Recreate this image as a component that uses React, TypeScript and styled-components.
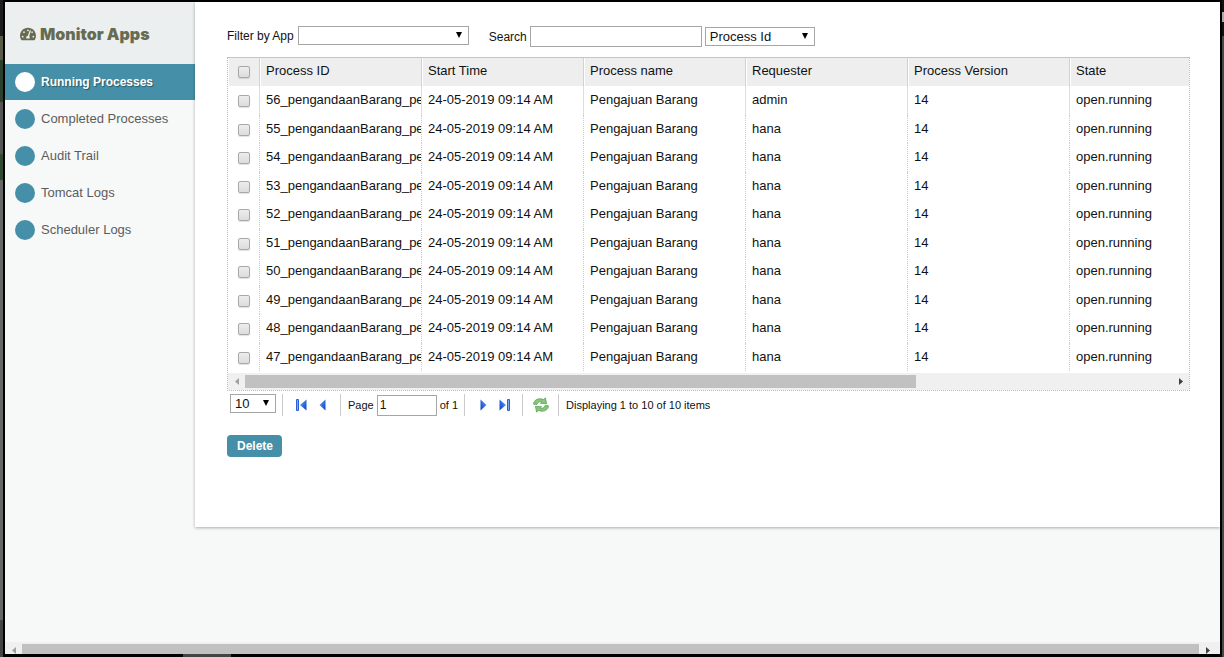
import React from 'react';
import styled, { createGlobalStyle, css } from 'styled-components';
import { FaTachometerAlt } from 'react-icons/fa';

const TEAL = '#4590a8';

const GlobalStyle = createGlobalStyle`
  *, *::before, *::after { box-sizing: border-box; }
  body {
    margin: 0;
    background: #000;
    color: #111;
    font: 13px/16px "Liberation Sans", Arial, sans-serif;
  }
  input, select, button { font-family: inherit; margin: 0; }
`;

const Backdrop = styled.div`
  display: flex;
  min-height: 100vh;
  padding: 2px 4px 3px 5px;
  background:
    linear-gradient(#444, #444) 183px 100% / 48px 3px no-repeat,
    linear-gradient(#1c1c1c 0 36px, #5a5a48 36px 60px, #2c4030 60px 102px, #555 102px 154px, #2f4a30 154px 180px, #666 180px 620px, #444 620px) 0 0 / 3px 100% no-repeat,
    linear-gradient(#111 0 12px, #aaa 12px 22px, #111 22px 36px, #444a4a 36px) 100% 0 / 2px 100% no-repeat,
    #000;
`;

const Overlay = styled.div`
  flex: 1;
  min-width: 0;
  display: flex;
  flex-direction: column;
  background: #f7f9f9;
`;

const Columns = styled.div`
  flex: 1;
  display: flex;
  align-items: flex-start;
`;

const Sidebar = styled.aside`
  flex: 0 0 190px;
`;

const Title = styled.h1`
  display: flex;
  align-items: center;
  gap: 4px;
  height: 62px;
  margin: 0;
  padding: 2px 0 0 15px;
  background: #ebeff0;
  color: #676c50;
  font: 900 16px/20px Inter, "Arial Black", sans-serif;
  svg { width: 16px; height: 16px; }
`;

const Menu = styled.nav`
  display: flex;
  flex-direction: column;
  gap: 1px;
`;

const MenuLink = styled.a<{ $active?: boolean }>`
  display: flex;
  align-items: center;
  gap: 6px;
  height: 36px;
  padding-left: 10px;
  color: #5c5c5c;
  text-decoration: none;
  &::before {
    content: '';
    width: 20px;
    height: 20px;
    border-radius: 50%;
    background: ${TEAL};
  }
  ${p => p.$active && css`
    background: ${TEAL};
    color: #fff;
    font-size: 12px;
    font-weight: bold;
    text-shadow: 1px 1px 1px rgba(0, 0, 0, 0.4);
    &::before { background: #fff; }
  `}
`;

const Main = styled.main`
  flex: 1;
  min-width: 0;
  min-height: 524px;
  padding: 24px 30px 70px 32px;
  background: #fff;
  box-shadow: 0 1px 3px rgba(0, 0, 0, 0.3);
  clip-path: inset(0 0 -6px -4px);
`;

const Filters = styled.form`
  display: flex;
  align-items: flex-start;
  gap: 20px;
  height: 21px;
  margin-bottom: 10px;
  font-size: 12px;
`;

const FilterGroup = styled.div`
  display: flex;
  align-items: center;
`;

const FilterLabel = styled.label`
  margin-right: 4px;
`;

const SelectBox = styled.span<{ $width: number }>`
  position: relative;
  display: block;
  width: ${p => p.$width}px;
  height: 19px;
  svg {
    position: absolute;
    right: 7px;
    top: 6px;
    pointer-events: none;
  }
`;

const NativeSelect = styled.select`
  appearance: none;
  display: block;
  width: 100%;
  height: 100%;
  padding: 0 4px;
  border: 1px solid #a6a6a6;
  border-radius: 0;
  background: #fff;
  color: #111;
  font-size: 13px;
  line-height: 16px;
`;

const TextField = styled.input`
  height: 21px;
  padding: 0 2px;
  border: 1px solid #a6a6a6;
  background: #fff;
  color: #111;
  font-size: 12px;
`;

const SearchField = styled(TextField)`
  width: 172px;
  margin-right: 3px;
`;

const SearchLabel = styled(FilterLabel)`
  margin-right: 3px;
`;

const Grid = styled.div`
  border: 1px dotted #bbb;
  border-top: 1px solid #c4c4c4;
`;

const Table = styled.table`
  width: 100%;
  margin-bottom: 2px;
  border-collapse: separate;
  border-spacing: 0;
  table-layout: fixed;
`;

const cell = css`
  overflow: hidden;
  white-space: nowrap;
  text-align: left;
  vertical-align: top;
  font-weight: normal;
  &:last-child { border-right: 0; }
`;

const HeadCell = styled.th<{ $width?: number }>`
  ${cell}
  width: ${p => (p.$width ? `${p.$width}px` : 'auto')};
  height: 28px;
  padding: 5px 0 0 6px;
  border-right: 1px solid #d2d2d2;
  background: #eee;
  box-shadow: inset 1px 0 0 #fff;
  &:first-child { padding: 8px 0 0 10px; }
`;

const BodyCell = styled.td`
  ${cell}
  padding: 6px 0 0 6px;
  border-right: 1px dotted #ccc;
  &:first-child { padding: 9px 0 0 10px; }
`;

const Row = styled.tr`
  height: 29px;
  &:nth-child(even) { height: 28px; }
  &:first-child > td { border-right-style: solid; border-right-color: #ddd; }
`;

const Check = styled.input`
  appearance: none;
  display: block;
  width: 12px;
  height: 12px;
  margin: 0;
  border: 1px solid #a8a8a8;
  border-radius: 2px;
  background: linear-gradient(#ededed, #dcdcdc);
  box-shadow: 0 1px 1px rgba(0, 0, 0, 0.12);
`;

const Bar = styled.div<{ $height: number; $end: number }>`
  display: flex;
  height: ${p => p.$height}px;
  padding: 2px ${p => p.$end}px 0 0;
  overflow: hidden;
  background: #f0f0f0;
`;

const BarEnd = styled.span<{ $color: string }>`
  display: flex;
  flex: 0 0 17px;
  align-items: center;
  justify-content: center;
  height: 13px;
  color: ${p => p.$color};
`;

const Thumb = styled.span<{ $grow: number }>`
  flex: ${p => p.$grow} 0 0;
  height: 13px;
  background: #c1c1c1;
`;

const Gap = styled.span<{ $grow: number }>`
  flex: ${p => p.$grow} 0 0;
`;

const Pager = styled.div`
  display: flex;
  align-items: center;
  height: 28px;
  padding-left: 3px;
  font-size: 11px;
`;

const Group = styled.div<{ $left: number; $right: number; $gap?: number }>`
  display: flex;
  align-items: center;
  gap: ${p => p.$gap ?? 0}px;
  height: 22px;
  padding: 0 ${p => p.$right}px 0 ${p => p.$left}px;
  border-right: 1px solid #ccc;
`;

const SizeGroup = styled(Group)`
  padding-bottom: 3px;
`;

const IconButton = styled.button`
  display: flex;
  align-items: center;
  justify-content: center;
  padding: 0;
  border: 0;
  background: none;
`;

const PageField = styled(TextField)`
  width: 60px;
`;

const Status = styled.span`
  margin-left: 7px;
`;

const DeleteButton = styled.button`
  display: block;
  height: 22px;
  margin-top: 16px;
  padding: 0 9px 0 10px;
  border: 0;
  border-radius: 4px;
  background: ${TEAL};
  color: #fff;
  font-size: 12px;
  font-weight: bold;
`;

function Select({ id, label, width, options }: { id: string; label?: string; width: number; options: string[] }) {
  return (
    <SelectBox $width={width}>
      <NativeSelect id={id} aria-label={label}>
        {options.map(o => <option key={o}>{o}</option>)}
      </NativeSelect>
      <svg width="6" height="6" viewBox="0 0 6 6" aria-hidden="true"><path d="M0 0h6L3 6z" fill="#000" /></svg>
    </SelectBox>
  );
}

function ArrowGlyph({ right }: { right?: boolean }) {
  return (
    <svg width="4" height="7" viewBox="0 0 4 7" aria-hidden="true">
      <path d={right ? 'M0 0L4 3.5L0 7z' : 'M4 0L0 3.5L4 7z'} fill="currentColor" />
    </svg>
  );
}

function ScrollBar({ height, thumb, rest, end = 0 }: { height: number; thumb: number; rest: number; end?: number }) {
  return (
    <Bar $height={height} $end={end} aria-hidden="true">
      <BarEnd $color="#a0a0a0"><ArrowGlyph /></BarEnd>
      <Thumb $grow={thumb} />
      {rest > 0 && <Gap $grow={rest} />}
      <BarEnd $color="#404040"><ArrowGlyph right /></BarEnd>
    </Bar>
  );
}

function PageArrow({ label, right, edge }: { label: string; right?: boolean; edge?: boolean }) {
  const width = edge ? 11 : 7;
  const id = `pg-${label}`;
  return (
    <IconButton type="button" aria-label={`${label} page`}>
      <svg width={width} height="12" viewBox={`0 0 ${width} 12`}>
        <defs>
          <linearGradient id={id} x1="0" y1="0" x2="1" y2="1">
            <stop offset="0" stopColor="#8bb4f4" />
            <stop offset="0.5" stopColor="#2f6fe6" />
            <stop offset="1" stopColor="#1440b4" />
          </linearGradient>
        </defs>
        <g transform={right ? `translate(${width} 0) scale(-1 1)` : undefined}>
          {edge && <path d="M0.5 0.5h2v11h-2z" fill="#7aa8f4" stroke="#2a60d4" />}
          <path d={edge ? 'M10.5 0.5v11L4 6z' : 'M6.5 0.5v11L0.5 6z'} fill={`url(#${id})`} />
        </g>
      </svg>
    </IconButton>
  );
}

function RefreshIcon() {
  return (
    <svg width="16" height="16" viewBox="0 0 16 16" fill="#86c876" stroke="#4d9a4e" strokeWidth="0.7" strokeLinejoin="round">
      <path d="M0.6 7.2C0.6 4 3.4 1.8 6.8 1.8C8.4 1.8 9.6 2.1 10.6 2.6L12.4 0.8L13.6 6.8L7.4 6.2L9 4.8C6.6 4 4.6 5.4 4 7.4z" />
      <path d="M15.4 8.8C15.4 12 12.6 14.2 9.2 14.2C7.6 14.2 6.4 13.9 5.4 13.4L3.6 15.2L2.4 9.2L8.6 9.8L7 11.2C9.4 12 11.4 10.6 12 8.6z" />
    </svg>
  );
}

const menu = ['Running Processes', 'Completed Processes', 'Audit Trail', 'Tomcat Logs', 'Scheduler Logs'];

const columns: { name: string; width?: number }[] = [
  { name: 'Process ID', width: 162 },
  { name: 'Start Time', width: 162 },
  { name: 'Process name', width: 162 },
  { name: 'Requester', width: 162 },
  { name: 'Process Version', width: 162 },
  { name: 'State' },
];

const rows = [56, 55, 54, 53, 52, 51, 50, 49, 48, 47].map(n => ({
  id: `${n}_pengandaanBarang_pe`,
  start: '24-05-2019 09:14 AM',
  name: 'Pengajuan Barang',
  requester: n === 56 ? 'admin' : 'hana',
  version: '14',
  state: 'open.running',
}));

export default function App() {
  return (
    <Backdrop>
      <GlobalStyle />
      <Overlay>
        <Columns>
          <Sidebar>
            <Title><FaTachometerAlt />Monitor Apps</Title>
            <Menu>
              {menu.map((m, i) => <MenuLink key={m} href="#" $active={i === 0}>{m}</MenuLink>)}
            </Menu>
          </Sidebar>
          <Main>
            <Filters>
              <FilterGroup>
                <FilterLabel htmlFor="app">Filter by App</FilterLabel>
                <Select id="app" width={171} options={['']} />
              </FilterGroup>
              <FilterGroup>
                <SearchLabel htmlFor="search">Search</SearchLabel>
                <SearchField id="search" type="text" />
                <Select id="field" label="Search field" width={110} options={['Process Id', 'Process name']} />
              </FilterGroup>
            </Filters>
            <Grid>
              <Table>
                <thead>
                  <tr>
                    <HeadCell $width={32}><Check type="checkbox" aria-label="Select all" /></HeadCell>
                    {columns.map(c => <HeadCell key={c.name} $width={c.width}>{c.name}</HeadCell>)}
                  </tr>
                </thead>
                <tbody>
                  {rows.map(r => (
                    <Row key={r.id}>
                      <BodyCell><Check type="checkbox" aria-label={`Select ${r.id}`} /></BodyCell>
                      <BodyCell>{r.id}</BodyCell>
                      <BodyCell>{r.start}</BodyCell>
                      <BodyCell>{r.name}</BodyCell>
                      <BodyCell>{r.requester}</BodyCell>
                      <BodyCell>{r.version}</BodyCell>
                      <BodyCell>{r.state}</BodyCell>
                    </Row>
                  ))}
                </tbody>
              </Table>
              <ScrollBar height={17} thumb={671} rest={256} />
            </Grid>
            <Pager>
              <SizeGroup $left={0} $right={6}>
                <Select id="size" label="Rows per page" width={46} options={['10', '20', '50']} />
              </SizeGroup>
              <Group $left={13} $right={14} $gap={12}>
                <PageArrow label="First" edge />
                <PageArrow label="Previous" />
              </Group>
              <Group $left={7} $right={6} $gap={3}>
                <label htmlFor="page">Page</label>
                <PageField id="page" type="text" defaultValue="1" />
                <span>of 1</span>
              </Group>
              <Group $left={15} $right={12} $gap={12}>
                <PageArrow label="Next" right />
                <PageArrow label="Last" right edge />
              </Group>
              <Group $left={10} $right={9}>
                <IconButton type="button" aria-label="Refresh"><RefreshIcon /></IconButton>
              </Group>
              <Status>Displaying 1 to 10 of 10 items</Status>
            </Pager>
            <DeleteButton type="button">Delete</DeleteButton>
          </Main>
        </Columns>
        <ScrollBar height={12} thumb={1} rest={0} end={4} />
      </Overlay>
    </Backdrop>
  );
}
